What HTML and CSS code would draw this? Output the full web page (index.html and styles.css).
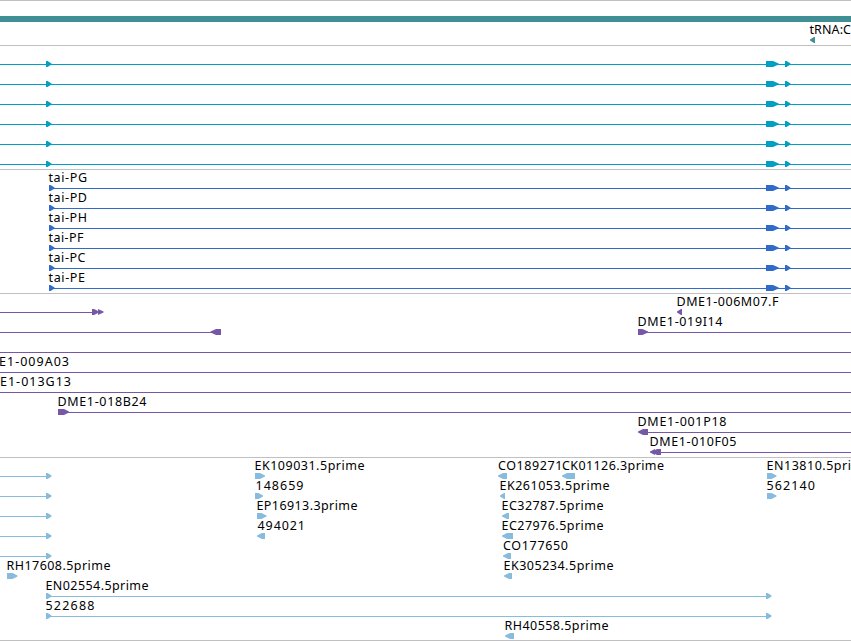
FILE: index.html
```
<!DOCTYPE html>
<html lang="en">
<head>
  <meta charset="UTF-8" />
  <title>tai - genome browser</title>
  <link rel="stylesheet" href="styles.css">
</head>
<body>

  <!-- shapes shared by the repeated rows -->
  <svg class="defs">
    <defs>
      <path id="head" d="M0 15h1.5l4 2.5v1l-4 2.5h-1.5z" />
      <path id="exon" d="M0 15h7l5.7 2.5v1l-5.7 2.5h-7z" />
      <g id="mrna">
        <path class="line" d="M0 18.5H851" />
        <use href="#head" x="46" /><use href="#exon" x="766" /><use href="#head" x="785" />
      </g>
      <g id="cds">
        <path class="line" d="M49 18.5H851" />
        <use href="#head" x="49" /><use href="#exon" x="766" /><use href="#head" x="785" />
      </g>
      <g id="est">
        <path class="line" d="M0 18.5H46" /><use href="#head" x="46" />
      </g>
    </defs>
  </svg>

  <main class="browser">
    <section class="track gene">
      <div class="gene-bar"></div>
      <svg class="row"><text x="809.5" y="12" textLength="41.5">tRNA:C</text><path d="M810 17.5l4-2.5h1v6h-1l-4-2.5z" /></svg>
    </section>

    <section class="track transcript">
      <svg class="row"><use href="#mrna" /></svg>
      <svg class="row"><use href="#mrna" /></svg>
      <svg class="row"><use href="#mrna" /></svg>
      <svg class="row"><use href="#mrna" /></svg>
      <svg class="row"><use href="#mrna" /></svg>
      <svg class="row"><use href="#mrna" /></svg>
    </section>

    <section class="track protein">
      <svg class="row"><text x="48.5" y="12" textLength="38.5">tai-PG</text><use href="#cds" /></svg>
      <svg class="row"><text x="48.5" y="12" textLength="38.5">tai-PD</text><use href="#cds" /></svg>
      <svg class="row"><text x="48.5" y="12" textLength="38.5">tai-PH</text><use href="#cds" /></svg>
      <svg class="row"><text x="48.5" y="12" textLength="35">tai-PF</text><use href="#cds" /></svg>
      <svg class="row"><text x="48.5" y="12" textLength="37">tai-PC</text><use href="#cds" /></svg>
      <svg class="row"><text x="48.5" y="12" textLength="36.5">tai-PE</text><use href="#cds" /></svg>
    </section>

    <section class="track bac">
      <svg class="row">
        <path class="line" d="M0 18.5H92" /><path d="M92 15h2l4 2v-2l5.5 2.5v1l-5.5 2.5v-2l-4 2h-2z" />
        <text x="676.5" y="12" textLength="102">DME1-006M07.F</text><path d="M677 17.5l4-2.5h1v6h-1l-4-2.5z" />
      </svg>
      <svg class="row">
        <path class="line" d="M0 18.5H212" /><path d="M210.5 17.5l5.5-2.5h5v6h-5l-5.5-2.5z" />
        <text x="637.5" y="12" textLength="85">DME1-019I14</text>
        <path class="line" d="M638 18.5H851" /><path d="M638 15h4.5l5.5 2.5v1l-5.5 2.5h-4.5z" />
      </svg>
      <svg class="row"><path class="line" d="M0 18.5H851" /></svg>
      <svg class="row"><text x="-1" y="12" textLength="70">E1-009A03</text><path class="line" d="M0 18.5H851" /></svg>
      <svg class="row"><text x="0" y="12" textLength="71">E1-013G13</text><path class="line" d="M0 18.5H851" /></svg>
      <svg class="row">
        <text x="57.5" y="12" textLength="89">DME1-018B24</text>
        <path class="line" d="M58 18.5H851" /><path d="M58 15h6l5 2.5v1l-5 2.5h-6z" />
      </svg>
      <svg class="row">
        <text x="637.5" y="12" textLength="89">DME1-001P18</text>
        <path class="line" d="M640 18.5H851" /><path d="M638 17.5l5-2.5h5v6h-5l-5-2.5z" />
      </svg>
      <svg class="row">
        <text x="649.5" y="12" textLength="87">DME1-010F05</text>
        <path class="line" d="M652 18.5H851" /><path d="M650 17.5l5-2.5v1l2-1h4v6h-4l-2-1v1l-5-2.5z" />
      </svg>
    </section>

    <section class="track cdna">
      <svg class="row">
        <use href="#est" />
        <text x="254.5" y="12" textLength="110">EK109031.5prime</text><path d="M255 15h5l5 2.5v1l-5 2.5h-5z" />
        <text x="498" y="12" textLength="64.5">CO189271</text><path d="M498 17.5l5-2.5h4v6h-4l-5-2.5z" />
        <text x="562" y="12" textLength="102">CK01126.3prime</text><path d="M562 17.5l5-2.5h8v6h-8l-5-2.5z" />
        <text x="766.5" y="12" textLength="84.5">EN13810.5pri</text><path d="M767 15h4.5l5 2.5v1l-5 2.5h-4.5z" />
      </svg>
      <svg class="row">
        <use href="#est" />
        <text x="255.5" y="12" textLength="48">148659</text><path d="M255 15h3.5l4.5 2.5v1l-4.5 2.5h-3.5z" />
        <text x="499.5" y="12" textLength="110">EK261053.5prime</text><path d="M500 17.5l4-2.5h1v6h-1l-4-2.5z" />
        <text x="766.5" y="12" textLength="48.5">562140</text><path d="M767 15h4.5l5 2.5v1l-5 2.5h-4.5z" />
      </svg>
      <svg class="row">
        <use href="#est" />
        <text x="256.5" y="12" textLength="101">EP16913.3prime</text><path d="M257 15h4.5l5 2.5v1l-5 2.5h-4.5z" />
        <text x="501.5" y="12" textLength="102">EC32787.5prime</text><path d="M502 17.5l5-2.5h2v6h-2l-5-2.5z" />
      </svg>
      <svg class="row">
        <use href="#est" />
        <text x="257.5" y="12" textLength="47.5">494021</text><path d="M257 17.5l5-2.5h3v6h-3l-5-2.5z" />
        <text x="501.5" y="12" textLength="102">EC27976.5prime</text><path d="M502 17.5l5-2.5h6v6h-6l-5-2.5z" />
      </svg>
      <svg class="row">
        <use href="#est" />
        <text x="503" y="12" textLength="65">CO177650</text><path d="M503 17.5l5-2.5h3v6h-3l-5-2.5z" />
      </svg>
      <svg class="row">
        <text x="6.5" y="12" textLength="104">RH17608.5prime</text><path d="M7 15h5.5l5 2.5v1l-5 2.5h-5.5z" />
        <text x="503.5" y="12" textLength="110">EK305234.5prime</text><path d="M504 17.5l5-2.5h3v6h-3l-5-2.5z" />
      </svg>
      <svg class="row">
        <text x="45.5" y="12" textLength="103">EN02554.5prime</text>
        <path class="line" d="M46 18.5H766" /><use href="#head" x="46" /><use href="#head" x="766" />
      </svg>
      <svg class="row">
        <text x="45.5" y="12" textLength="49">522688</text>
        <path class="line" d="M46 18.5H766" /><use href="#head" x="46" /><use href="#head" x="766" />
      </svg>
      <svg class="row"><text x="504.5" y="12" textLength="104">RH40558.5prime</text><path d="M505 17.5l5-2.5h4v6h-4l-5-2.5z" /></svg>
    </section>
  </main>

</body>
</html>
```
FILE: styles.css
```
* {
  margin: 0;
  padding: 0;
  box-sizing: border-box;
}

body {
  background: #fff;
  overflow: hidden;
}

.defs {
  display: block;
  width: 0;
  height: 0;
}

.browser {
  width: 851px;
  border-bottom: 1px solid #c0c0c0;
}

.track {
  border-top: 1px solid #c0c0c0;
  padding-bottom: 3px;
}

.row {
  display: block;
  width: 851px;
  height: 20px;
  overflow: visible;
  fill: currentColor;
  stroke: none;
}

.row text {
  font-family: "Noto Sans", "DejaVu Sans", sans-serif;
  font-size: 12.5px;
  fill: #000;
}

.line {
  fill: none;
  stroke: currentColor;
  stroke-width: 1px;
  shape-rendering: crispEdges;
}

.gene {
  padding-top: 15px;
  color: #3f8f95;
}

.gene-bar {
  height: 6px;
  background: #3f8f95;
}

.transcript {
  color: #009fc3;
}

.protein {
  color: #306acb;
}

.bac {
  color: #7758a8;
}

.cdna {
  padding-bottom: 2px;
  color: #87bcde;
}
```
